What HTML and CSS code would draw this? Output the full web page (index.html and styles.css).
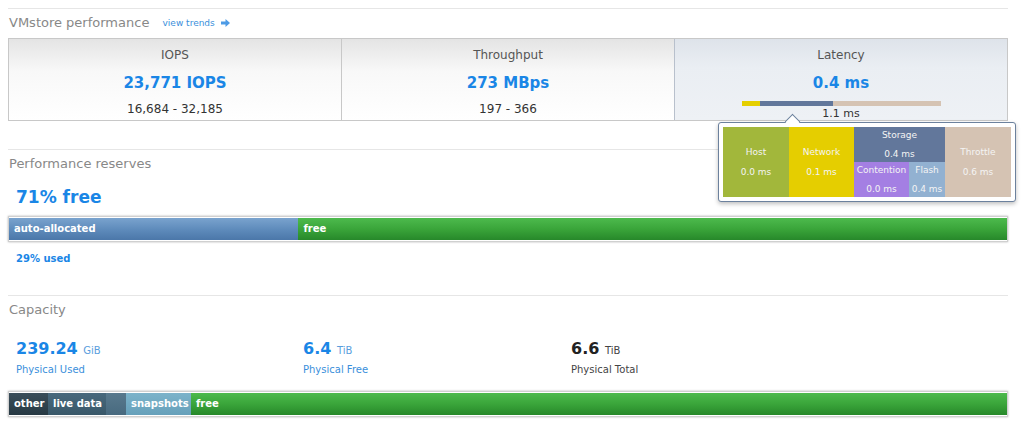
FILE: index.html
```html
<!DOCTYPE html>
<html lang="en">

<head>
    <meta charset="UTF-8">
    <title>VMstore</title>
    <link rel="stylesheet" href="styles.css">
</head>

<body>
    <div class="page">

        <div class="section perf">
            <h2 class="section-title">VMstore performance
                <a class="trends" href="#">view trends
                    <svg width="9" height="8" viewBox="0 0 9 8"><path d="M0 2.5h4.5V0L9 4 4.5 8V5.5H0z" fill="#4d9be6"/></svg>
                </a>
            </h2>
            <div class="cards">
                <div class="card">
                    <div class="card-label">IOPS</div>
                    <div class="card-value">23,771 IOPS</div>
                    <div class="card-range">16,684 - 32,185</div>
                </div>
                <div class="card">
                    <div class="card-label">Throughput</div>
                    <div class="card-value">273 MBps</div>
                    <div class="card-range">197 - 366</div>
                </div>
                <div class="card card-active">
                    <div class="card-label">Latency</div>
                    <div class="card-value">0.4 ms</div>
                    <div class="lat-bar">
                        <span class="lat-network"></span>
                        <span class="lat-storage"></span>
                        <span class="lat-throttle"></span>
                    </div>
                    <div class="card-range lat-total">1.1 ms</div>

                    <div class="tooltip">
                        <div class="tip-grid">
                            <div class="seg seg-host"><span>Host</span><span>0.0 ms</span></div>
                            <div class="seg seg-network"><span>Network</span><span>0.1 ms</span></div>
                            <div class="seg-storage">
                                <div class="seg seg-store-top"><span>Storage</span><span>0.4 ms</span></div>
                                <div class="seg-store-bottom">
                                    <div class="seg seg-contention"><span>Contention</span><span>0.0 ms</span></div>
                                    <div class="seg seg-flash"><span>Flash</span><span>0.4 ms</span></div>
                                </div>
                            </div>
                            <div class="seg seg-throttle"><span>Throttle</span><span>0.6 ms</span></div>
                        </div>
                    </div>
                </div>
            </div>
        </div>

        <div class="section reserves">
            <h2 class="section-title">Performance reserves</h2>
            <div class="big-value">71% free</div>
            <div class="bar">
                <div class="bar-seg bar-blue" style="width: 29%">auto-allocated</div>
                <div class="bar-seg bar-green">free</div>
            </div>
            <div class="used">29% used</div>
        </div>

        <div class="section capacity">
            <h2 class="section-title">Capacity</h2>
            <div class="cap-stats">
                <div class="stat">
                    <div class="stat-value">239.24 <small>GiB</small></div>
                    <div class="stat-label">Physical Used</div>
                </div>
                <div class="stat">
                    <div class="stat-value">6.4 <small>TiB</small></div>
                    <div class="stat-label">Physical Free</div>
                </div>
                <div class="stat stat-total">
                    <div class="stat-value">6.6 <small>TiB</small></div>
                    <div class="stat-label">Physical Total</div>
                </div>
            </div>
            <div class="bar">
                <div class="bar-seg bar-other" style="width: 39px">other</div>
                <div class="bar-seg bar-live" style="width: 58px">live data</div>
                <div class="bar-seg bar-meta" style="width: 20px"></div>
                <div class="bar-seg bar-snap" style="width: 65px">snapshots</div>
                <div class="bar-seg bar-green">free</div>
            </div>
        </div>

    </div>
</body>

</html>
```

FILE: styles.css
```css
body {
    margin: 0;
    font-family: "DejaVu Sans", Verdana, sans-serif;
    background-color: #FFF;
    color: #333;
}

.page {
    width: 1000px;
    padding: 8px;
}

.section {
    border-top: 1px solid #E6E6E6;
}

.section-title {
    font-size: 13px;
    font-weight: normal;
    color: #888;
    margin: 0;
    padding: 6px 1px 0;
    height: 23px;
    line-height: 16px;
}

.trends {
    font-size: 9px;
    color: #3A8FDB;
    text-decoration: none;
    margin-left: 9px;
    vertical-align: 1px;
}

.trends svg {
    margin-left: 3px;
    vertical-align: -1px;
}

/* performance cards */

.cards {
    display: flex;
    border: 1px solid #C8C8C8;
    height: 81px;
    margin-bottom: 28px;
}

.card {
    flex: 1;
    position: relative;
    text-align: center;
    background: linear-gradient(#E4E4E4, #F8F8F8 40%, #FFF);
    border-left: 1px solid #C8C8C8;
}

.card:first-child {
    border-left: none;
}

.card-active {
    background: linear-gradient(#DEE3EA, #EAEEF3 35%, #EEF1F5);
    border-left-color: #B8C0CC;
}

.card-label {
    font-size: 12px;
    color: #555;
    margin-top: 9px;
    height: 18px;
}

.card-value {
    font-size: 15px;
    font-weight: bold;
    color: #1A86E6;
    margin-top: 8px;
    height: 20px;
}

.card-range {
    font-size: 12px;
    color: #333;
    margin-top: 8px;
}

.lat-bar {
    display: flex;
    width: 199px;
    height: 5px;
    margin: 7px auto 0;
}

.lat-network {
    width: 18px;
    background-color: #E5CF00;
}

.lat-storage {
    width: 73px;
    background-color: #62779B;
}

.lat-throttle {
    flex: 1;
    background-color: #D5C3B3;
}

.lat-total {
    font-size: 11px;
    margin-top: 1px;
}

/* latency breakdown tooltip */

.tooltip {
    position: absolute;
    left: 43px;
    top: 83px;
    width: 288px;
    height: 70px;
    padding: 4px;
    background-color: #FFF;
    border: 1px solid #6C819D;
    border-radius: 3px;
    box-shadow: 0 2px 4px rgba(0, 0, 0, 0.25);
    z-index: 2;
}

.tooltip::before {
    content: "";
    position: absolute;
    left: 68px;
    top: -7px;
    width: 10px;
    height: 10px;
    background-color: #FFF;
    border-left: 1px solid #6C819D;
    border-top: 1px solid #6C819D;
    transform: rotate(45deg);
}

.tip-grid {
    position: relative;
    display: flex;
    height: 70px;
    font-size: 9px;
    color: #F4F4F4;
}

.seg {
    display: flex;
    flex-direction: column;
    justify-content: center;
    align-items: center;
    gap: 10px;
    text-align: center;
    overflow: hidden;
    white-space: nowrap;
}

.seg-host {
    width: 66px;
    background-color: #A2B73B;
}

.seg-network {
    width: 65px;
    background-color: #E5CE00;
}

.seg-storage {
    width: 91px;
    display: flex;
    flex-direction: column;
}

.seg-store-top {
    height: 35px;
    gap: 9px;
    background-color: #62779B;
}

.seg-store-bottom {
    flex: 1;
    display: flex;
}

.seg-store-bottom .seg {
    gap: 9px;
}

.seg-contention {
    width: 55px;
    background-color: #A47FE3;
}

.seg-flash {
    flex: 1;
    background-color: #92B1D1;
}

.seg-throttle {
    flex: 1;
    background-color: #D5C3B3;
}

/* reserves */

.big-value {
    font-size: 17px;
    font-weight: bold;
    color: #1A86E6;
    padding-left: 8px;
    height: 29px;
    line-height: 20px;
    margin-top: 8px;
}

.bar {
    display: flex;
    height: 22px;
    border: 1px solid #D0D0D0;
    box-shadow: 0 0 2px rgba(0, 0, 0, 0.3);
    padding: 1px 0;
    background-color: #FFF;
}

.bar-seg {
    font-size: 10px;
    font-weight: bold;
    color: #FFF;
    line-height: 22px;
    padding-left: 5px;
    box-sizing: border-box;
    white-space: nowrap;
    overflow: hidden;
}

.bar-blue {
    background: linear-gradient(#7AA3CE, #5F8CBC 50%, #4B77A9);
}

.bar-green {
    flex: 1;
    background: linear-gradient(#4DBA4D, #3AA53A 50%, #27882A);
}

.bar-other {
    background: linear-gradient(#3A4E5A, #273943);
}

.bar-live {
    background: linear-gradient(#48697D, #395869);
}

.bar-meta {
    background: linear-gradient(#58798D, #486A7F);
}

.bar-snap {
    background: linear-gradient(#7CB3CA, #66A0BA);
}

.used {
    font-size: 10px;
    font-weight: bold;
    color: #1A86E6;
    padding-left: 8px;
    margin-top: 11px;
    height: 42px;
}

/* capacity */

.cap-stats {
    display: flex;
    padding-left: 8px;
    height: 57px;
    margin-top: 9px;
}

.stat {
    width: 287px;
}

.stat + .stat {
    width: 268px;
}

.stat-value {
    font-size: 16px;
    font-weight: bold;
    color: #1A86E6;
    height: 22px;
    line-height: 22px;
    margin-top: 4px;
}

.stat-value small {
    font-size: 10px;
    font-weight: normal;
    color: #5A9EDD;
}

.stat-label {
    font-size: 10px;
    color: #3A8FDB;
    margin-top: 4px;
}

.stat-total .stat-value {
    color: #222;
}

.stat-total .stat-value small,
.stat-total .stat-label {
    color: #444;
}
```
